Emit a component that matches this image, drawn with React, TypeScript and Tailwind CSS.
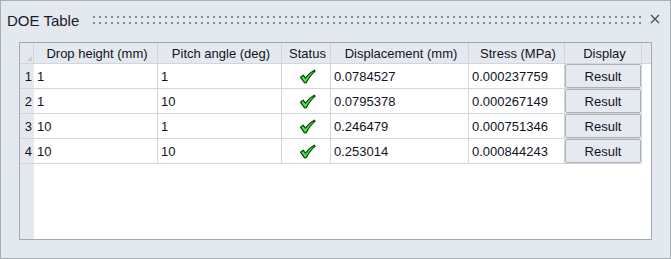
import React from "react";

const rows = [
  { n: 1, h: "1", p: "1", d: "0.0784527", s: "0.000237759" },
  { n: 2, h: "1", p: "10", d: "0.0795378", s: "0.000267149" },
  { n: 3, h: "10", p: "1", d: "0.246479", s: "0.000751346" },
  { n: 4, h: "10", p: "10", d: "0.253014", s: "0.000844243" },
];

function Check() {
  return (
    <svg width="17" height="15" viewBox="0 0 17 15">
      <path
        d="M1.5 8.2 L4.2 6.2 L6.4 9.2 Q10 4 15.2 1.2 L16 2.4 Q11.2 6.2 7.2 13.6 L5.6 13.8 Z"
        fill="#3cf03c"
        stroke="#123f12"
        strokeWidth="1.2"
        strokeLinejoin="round"
      />
    </svg>
  );
}

export default function App() {
  const font = { fontFamily: '"Liberation Sans", Arial, sans-serif' };
  return (
    <div
      className="w-[671px] h-[259px] border border-[#a9aeb3] bg-[#e3e9ee] flex flex-col text-[#12121f]"
      style={font}
    >
      <div className="h-[41px] flex items-start pt-[11px] pl-[6px] pr-[9px]">
        <span className="text-[15px] leading-[17px] text-[#1a1a28]">DOE Table</span>
        <svg className="ml-[14px] mt-[4px]" width="550" height="9">
          <defs>
            <pattern id="dots" width="6" height="6" patternUnits="userSpaceOnUse">
              <rect x="0" y="0" width="2" height="2" fill="#83898f" />
            </pattern>
          </defs>
          <rect x="0" y="0" width="550" height="9" fill="url(#dots)" />
        </svg>
        <svg className="ml-[7px] mt-[2px]" width="10" height="10" viewBox="0 0 10 10">
          <path d="M1 1 L9 9 M9 1 L1 9" stroke="#4a4f55" strokeWidth="1.3" />
        </svg>
      </div>

      <div className="ml-[18px] w-[633px] h-[198px] border border-[#a4a9ad] bg-white flex text-[13px]">
        <div className="w-[14px] h-full bg-[#e3e9ee] flex flex-col shrink-0">
          <div className="h-[21px] border-b border-r border-[#d2d6da] relative shrink-0">
            <svg className="absolute left-[7px] top-[13px]" width="5" height="5">
              <path d="M5 0 L5 5 L0 5 Z" fill="#c9cdd1" />
            </svg>
          </div>
          {rows.map((r) => (
            <div
              key={r.n}
              className="h-[25px] border-b border-[#d2d6da] flex items-center justify-end pr-[2px] pt-[2px] shrink-0"
            >
              {r.n}
            </div>
          ))}
        </div>

        <div className="flex-1 flex flex-col">
          <div className="h-[21px] bg-[#e3e9ee] border-b border-[#d2d6da] flex shrink-0">
            {[
              ["Drop height (mm)", "w-[124px]"],
              ["Pitch angle (deg)", "w-[124px]"],
              ["Status", "w-[49px]"],
              ["Displacement (mm)", "w-[138px]"],
              ["Stress (MPa)", "w-[96px]"],
              ["Display", "w-[77px]"],
            ].map(([t, w]) => (
              <div
                key={t}
                className={`${w} shrink-0 border-r border-[#d2d6da] flex items-center justify-center pt-[2px] pl-[3px] whitespace-nowrap`}
              >
                {t}
              </div>
            ))}
          </div>

          {rows.map((r) => (
            <div key={r.n} className="h-[25px] flex shrink-0">
              <div className="w-[124px] shrink-0 border-r border-b border-[#d2d6da] flex items-center pl-[3px] pt-[2px]">
                {r.h}
              </div>
              <div className="w-[124px] shrink-0 border-r border-b border-[#d2d6da] flex items-center pl-[3px] pt-[2px]">
                {r.p}
              </div>
              <div className="w-[49px] shrink-0 border-r border-b border-[#d2d6da] flex items-center justify-center pl-[2px]">
                <Check />
              </div>
              <div className="w-[138px] shrink-0 border-r border-b border-[#d2d6da] flex items-center pl-[3px] pt-[2px]">
                {r.d}
              </div>
              <div className="w-[96px] shrink-0 border-r border-b border-[#d2d6da] flex items-center pl-[3px] pt-[2px]">
                {r.s}
              </div>
              <div className="w-[77px] shrink-0 border-r border-b border-[#d2d6da] flex">
                <div className="flex-1 border border-[#adb2b7] rounded-[2px] bg-[#e4eaef] flex items-center justify-center pt-[1px]">
                  Result
                </div>
              </div>
            </div>
          ))}
        </div>
      </div>
    </div>
  );
}
